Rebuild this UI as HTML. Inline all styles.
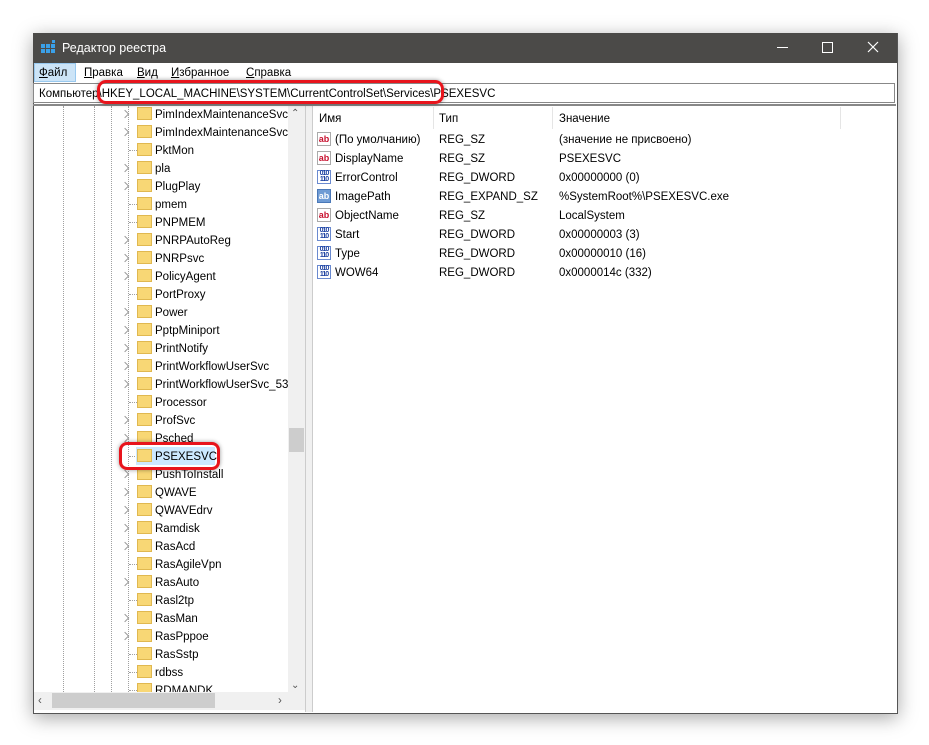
<!DOCTYPE html><html><head><meta charset="utf-8"><style>
body{margin:0;width:929px;height:745px;background:#fff;position:relative;overflow:hidden;font-family:"Liberation Sans","DejaVu Sans",sans-serif;font-size:11.5px;color:#000}
.abs{position:absolute}
.win{left:33px;top:33px;width:863px;height:679px;background:#fff;box-shadow:0 4px 18px rgba(0,0,0,.35);border:1px solid #555}
.t{position:absolute;white-space:nowrap;line-height:16px}
.fold{position:absolute;width:15px;height:13px;background:#f8d775;border:1px solid #e0b850;box-sizing:border-box}
.chev{position:absolute;width:5px;height:5px;border-right:1.5px solid #999;border-top:1.5px solid #999;transform:rotate(45deg)}
.dot{position:absolute;border-left:1px dotted #a0a0a0}
.hd{position:absolute;border-top:1px dotted #a0a0a0;width:8px}
.ic{position:absolute;width:14px;height:14px;font-size:9px;font-weight:bold;line-height:13px;text-align:center;box-sizing:border-box}
.ab{color:#c8102e;border:1px solid #aaa;background:#fff}
.bn{color:#1a3fa0;border:1px solid #6a8ad0;background:#fff;font-size:7px;line-height:6px;letter-spacing:-1px}
</style></head><body>
<div class="abs win"></div>
<div class="abs" style="left:33px;top:33px;width:864px;height:30px;background:#4b4a48"></div>
<svg class="abs" style="left:41px;top:40px" width="16" height="16"><g fill="#3aa0e8"><rect x="0" y="4" width="4" height="4"/><rect x="5" y="4" width="4" height="4"/><rect x="0" y="9" width="4" height="4"/><rect x="5" y="9" width="4" height="4"/><rect x="10" y="9" width="4" height="4"/><rect x="10" y="4" width="4" height="4"/><rect x="11" y="0" width="3" height="3"/></g></svg>
<div class="t" style="left:62px;top:40px;color:#fff;font-size:12.5px">Редактор реестра</div>
<div class="abs" style="left:777px;top:47px;width:11px;border-top:1px solid #fff"></div>
<div class="abs" style="left:822px;top:42px;width:9px;height:9px;border:1px solid #fff"></div>
<svg class="abs" style="left:867px;top:41px" width="12" height="12"><path d="M1 1L11 11M11 1L1 11" stroke="#fff" stroke-width="1.2"/></svg>
<div class="abs" style="left:34px;top:63px;width:42px;height:19px;background:#cce4f7;border:1px solid #99c9ef;box-sizing:border-box"></div>
<div class="t" style="left:39px;top:65px"><u>Ф</u>айл</div>
<div class="t" style="left:84px;top:65px"><u>П</u>равка</div>
<div class="t" style="left:137px;top:65px"><u>В</u>ид</div>
<div class="t" style="left:171px;top:65px"><u>И</u>збранное</div>
<div class="t" style="left:246px;top:65px"><u>С</u>правка</div>
<div class="abs" style="left:33px;top:83px;width:862px;height:20px;border:1px solid #888;box-sizing:border-box;background:#fff"></div>
<div class="t" style="left:39px;top:86px">Компьютер\HKEY_LOCAL_MACHINE\SYSTEM\CurrentControlSet\Services\PSEXESVC</div>
<div class="abs" style="left:33px;top:104px;width:863px;height:2px;background:#888"></div>
<div class="abs" style="left:305px;top:106px;width:6px;height:606px;background:#f0f0f0;border-left:1px solid #ccc;border-right:1px solid #ccc"></div>
<div class="dot" style="left:63px;top:106px;height:586px"></div>
<div class="dot" style="left:94px;top:106px;height:586px"></div>
<div class="dot" style="left:111px;top:106px;height:586px"></div>
<div class="dot" style="left:128px;top:106px;height:586px"></div>
<div id="tree"></div>
<div class="abs" style="left:288px;top:106px;width:17px;height:586px;background:#f0f0f0"></div>
<div class="abs" style="left:289px;top:428px;width:15px;height:24px;background:#cdcdcd"></div>
<div class="t" style="left:291px;top:106px;color:#555;font-size:10px">⌃</div>
<div class="t" style="left:291px;top:678px;color:#555;font-size:10px">⌄</div>
<div class="abs" style="left:34px;top:692px;width:271px;height:18px;background:#f0f0f0"></div>
<div class="abs" style="left:52px;top:693px;width:163px;height:15px;background:#cdcdcd"></div>
<div class="t" style="left:38px;top:693px;color:#555">‹</div>
<div class="t" style="left:278px;top:693px;color:#555">›</div>
<div class="t" style="left:319px;top:111px">Имя</div>
<div class="t" style="left:439px;top:111px">Тип</div>
<div class="t" style="left:559px;top:111px">Значение</div>
<div class="abs" style="left:433px;top:107px;height:22px;border-left:1px solid #e5e5e5"></div>
<div class="abs" style="left:552px;top:107px;height:22px;border-left:1px solid #e5e5e5"></div>
<div class="abs" style="left:840px;top:107px;height:22px;border-left:1px solid #e5e5e5"></div>
<div id="rows"></div>
<div class="abs" style="left:97px;top:80px;width:347px;height:24px;border:3px solid #e8141c;border-radius:9px;box-sizing:border-box;box-shadow:0 0 4px rgba(0,0,0,.4)"></div>
<div class="abs" style="left:119px;top:442px;width:101px;height:28px;border:3px solid #e8141c;border-radius:8px;box-sizing:border-box;box-shadow:0 0 4px rgba(0,0,0,.4)"></div>
<script>
var items=[["PimIndexMaintenanceSvc",1],["PimIndexMaintenanceSvc",1],["PktMon",0],["pla",1],["PlugPlay",1],["pmem",0],["PNPMEM",0],["PNRPAutoReg",1],["PNRPsvc",1],["PolicyAgent",1],["PortProxy",0],["Power",1],["PptpMiniport",1],["PrintNotify",1],["PrintWorkflowUserSvc",1],["PrintWorkflowUserSvc_53",1],["Processor",0],["ProfSvc",1],["Psched",1],["PSEXESVC",2],["PushToInstall",1],["QWAVE",1],["QWAVEdrv",1],["Ramdisk",1],["RasAcd",1],["RasAgileVpn",0],["RasAuto",1],["Rasl2tp",0],["RasMan",1],["RasPppoe",1],["RasSstp",0],["rdbss",0],["RDMANDK",0]];
var h="";items.forEach(function(it,i){var c=114+18*i;
if(it[1]==1)h+='<div class="chev" style="left:122px;top:'+(c-3)+'px"></div>';else h+='<div class="hd" style="left:129px;top:'+c+'px"></div>';
if(it[1]==2)h+='<div class="abs" style="left:136px;top:'+(c-9)+'px;width:79px;height:18px;background:#cce8ff"></div>';
h+='<div class="fold" style="left:137px;top:'+(c-7)+'px"></div><div class="t" style="left:155px;top:'+(c-7)+'px">'+it[0]+'</div>';});
document.getElementById("tree").innerHTML=h;
var r=[["ab","(По умолчанию)","REG_SZ","(значение не присвоено)"],["ab","DisplayName","REG_SZ","PSEXESVC"],["bn","ErrorControl","REG_DWORD","0x00000000 (0)"],["ab2","ImagePath","REG_EXPAND_SZ","%SystemRoot%\\PSEXESVC.exe"],["ab","ObjectName","REG_SZ","LocalSystem"],["bn","Start","REG_DWORD","0x00000003 (3)"],["bn","Type","REG_DWORD","0x00000010 (16)"],["bn","WOW64","REG_DWORD","0x0000014c (332)"]];
h="";r.forEach(function(x,i){var c=139+19*i;
if(x[0]=="ab")h+='<div class="ic ab" style="left:317px;top:'+(c-7)+'px">ab</div>';
else if(x[0]=="ab2")h+='<div class="ic" style="left:317px;top:'+(c-7)+'px;background:#6f9bd4;color:#fff;border:1px solid #4a78b8">ab</div>';
else h+='<div class="ic bn" style="left:317px;top:'+(c-7)+'px">010<br>110</div>';
h+='<div class="t" style="left:335px;top:'+(c-7)+'px">'+x[1]+'</div><div class="t" style="left:439px;top:'+(c-7)+'px">'+x[2]+'</div><div class="t" style="left:559px;top:'+(c-7)+'px">'+x[3]+'</div>';});
document.getElementById("rows").innerHTML=h;
</script>
</body></html>
